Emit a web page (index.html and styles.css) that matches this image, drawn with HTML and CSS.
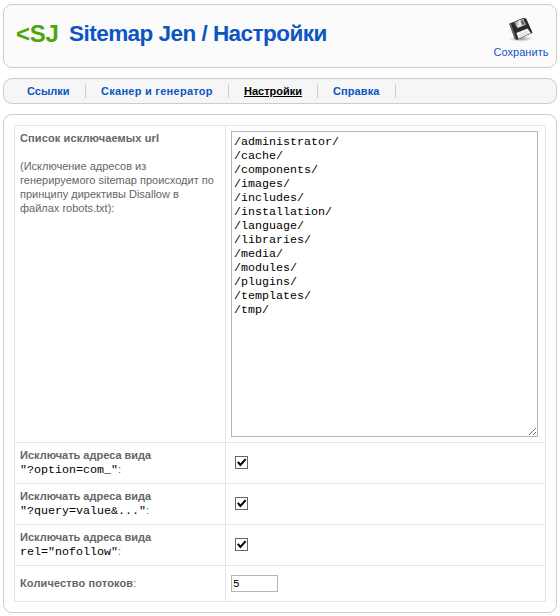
FILE: index.html
```
<!DOCTYPE html>
<html lang="ru">
<head>
<meta charset="utf-8">
<title>Sitemap Jen / Настройки</title>
<link rel="stylesheet" href="styles.css">
</head>
<body>
<header class="panel header">
  <span class="logo">&lt;SJ</span>
  <h1 class="title">Sitemap Jen / Настройки</h1>
  <a class="save">
    <svg class="save-icon" width="28" height="26" viewBox="0 0 28 26">
      <defs>
        <radialGradient id="shadow"><stop offset="0" stop-color="#888"/><stop offset="1" stop-color="#bbb" stop-opacity="0"/></radialGradient>
        <linearGradient id="metal"><stop offset="0" stop-color="#777"/><stop offset=".45" stop-color="#eee"/><stop offset="1" stop-color="#999"/></linearGradient>
      </defs>
      <ellipse cx="14" cy="22.8" rx="13" ry="3" fill="url(#shadow)"/>
      <path d="M2.2 7.8 16 2l3.2.5L25.6 16.8 9.8 24 7.9 23z" fill="#292929"/>
      <path d="M2.2 7.8 7.9 23l1.9 1L4 7.6z" fill="#666"/>
      <path d="M7 6.4 16.1 2.7 19.2 8.8 10.4 12z" fill="url(#metal)"/>
      <path d="M13.6 4.7l2-.8 1.9 4.3-2 .8z" fill="#555"/>
      <path d="M9.3 17.1 20.4 12.5 23.9 17 11.6 22.7z" fill="#f5f5f5"/>
      <path d="M11.8 18.8l8.4-3.3M12.8 20.5l8.6-3.4" stroke="#c6cbd2" stroke-width=".7"/>
    </svg>
    <span class="save-text">Сохранить</span>
  </a>
</header>
<nav class="panel nav">
  <a class="tab tab-links">Ссылки</a>
  <a class="tab tab-scan">Сканер и генератор</a>
  <a class="tab tab-settings active">Настройки</a>
  <a class="tab tab-help">Справка</a>
</nav>
<main class="panel content">
  <div class="settings">
    <div class="label top"><b class="heading">Список исключаемых url</b><br><br>(Исключение адресов из<br>генерируемого sitemap происходит по<br>принципу директивы Disallow в<br>файлах robots.txt):</div>
    <div class="field top">
      <div class="textarea">/administrator/
/cache/
/components/
/images/
/includes/
/installation/
/language/
/libraries/
/media/
/modules/
/plugins/
/templates/
/tmp/<svg class="grip" width="9" height="9" viewBox="0 0 9 9"><path d="M1 8 8 1M5 8 8 5" stroke="#444" stroke-width="1" stroke-dasharray="1.1 .4"/></svg></div>
    </div>
    <div class="label"><div><b>Исключать адреса вида</b><br><code>"?option=com_"</code>:</div></div>
    <div class="field"><span class="check"><svg width="11" height="11" viewBox="0 0 11 11"><path d="M1.8 4.8 4.4 8 9.7 2.2" /></svg></span></div>
    <div class="label"><div><b>Исключать адреса вида</b><br><code>"?query=value&amp;..."</code>:</div></div>
    <div class="field"><span class="check"><svg width="11" height="11" viewBox="0 0 11 11"><path d="M1.8 4.8 4.4 8 9.7 2.2" /></svg></span></div>
    <div class="label"><div><b>Исключать адреса вида</b><br><code>rel="nofollow"</code>:</div></div>
    <div class="field"><span class="check"><svg width="11" height="11" viewBox="0 0 11 11"><path d="M1.8 4.8 4.4 8 9.7 2.2" /></svg></span></div>
    <div class="label"><div><b class="heading">Количество потоков</b>:</div></div>
    <div class="field"><div class="number">5</div></div>
  </div>
</main>
</body>
</html>
```
FILE: styles.css
```
* { box-sizing: border-box; }
body {
  margin: 0;
  padding: 4px 3px 3px;
  background: #fff;
  color: #666;
  font: 11px/14px "Liberation Sans", Arial, sans-serif;
}
.panel { border: 1px solid #ccc; border-radius: 9px; }
.header {
  display: flex;
  height: 64px;
  margin-bottom: 10px;
  padding: 0 7px 0 12px;
  background: #fbfbfb;
}
.logo {
  width: 53px;
  padding-top: 14px;
  color: #4da60c;
  font-size: 24px;
  font-weight: bold;
  letter-spacing: -.3px;
  line-height: 30px;
}
.title {
  flex: 1;
  margin: 0;
  padding-top: 14px;
  color: #0b55c4;
  font-size: 22.5px;
  letter-spacing: -.53px;
  line-height: 30px;
  white-space: nowrap;
}
.save {
  display: flex;
  flex-direction: column;
  align-items: center;
  width: 56px;
  padding-top: 11px;
  color: #0b55c4;
}
.save-icon { display: block; height: 26px; }
.save-text { margin-top: 3px; line-height: 14px; letter-spacing: .05px; }
.nav {
  display: flex;
  align-items: center;
  height: 26px;
  margin-bottom: 10px;
  padding-left: 8px;
  background: #f6f6f6;
}
.tab {
  height: 14px;
  padding-left: 15px;
  border-right: 1px solid #ccc;
  color: #0b55c4;
  font-weight: bold;
  line-height: 14px;
  white-space: nowrap;
}
.tab-links { width: 74px; }
.tab-scan { width: 143px; letter-spacing: .27px; }
.tab-settings { width: 89px; }
.tab-help { width: 78px; letter-spacing: .1px; }
.active { color: #000; text-decoration: underline; }
.content { height: 499px; padding: 10px; }
.settings {
  display: grid;
  width: 532px;
  grid-template-columns: 211px 320px;
  grid-template-rows: 317px 41px 41px 41px 36px;
  border: solid #e5e5e5;
  border-width: 1px 0 0 1px;
}
.label, .field {
  display: flex;
  align-items: center;
  padding: 0 5px 2px;
  border: solid #e5e5e5;
  border-width: 0 1px 1px 0;
}
.field:last-child { padding-bottom: 0; }
.label.top { display: block; padding-top: 5px; white-space: nowrap; }
.field.top { align-items: flex-start; padding-top: 5px; }
.heading { letter-spacing: .12px; }
code, .textarea, .number {
  color: #000;
  font-family: "Liberation Mono", "Courier New", monospace;
  font-size: 11.67px;
}
.textarea {
  position: relative;
  width: 307px;
  height: 306px;
  padding: 3px 2px;
  border: 1px solid #b5b5b5;
  white-space: pre;
}
.grip { position: absolute; right: 0; bottom: 0; }
.check {
  width: 13px;
  height: 13px;
  margin-left: 4px;
  border: 1px solid #666;
}
.check svg { display: block; }
.check path { fill: none; stroke: #000; stroke-width: 2; }
.number {
  width: 47px;
  height: 17px;
  padding-left: 1px;
  border: 1px solid #b5b5b5;
  font-size: 11px;
  line-height: 16px;
}
```
